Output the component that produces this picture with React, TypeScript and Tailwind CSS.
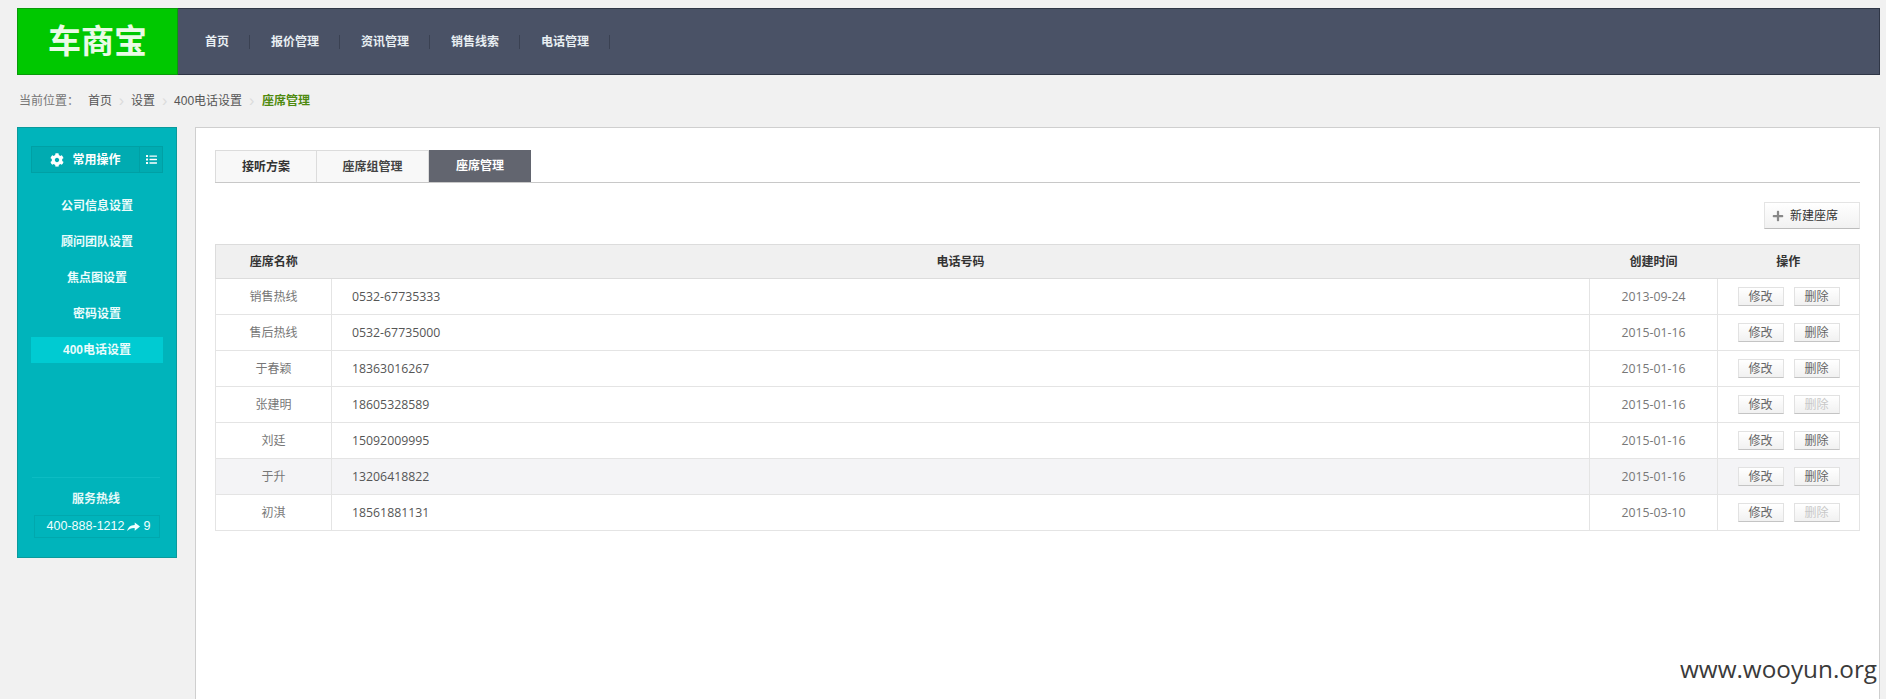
import React from 'react';
import { FaCog, FaList, FaPlus } from 'react-icons/fa';

const navItems = ['首页', '报价管理', '资讯管理', '销售线索', '电话管理'];
const sideItems = ['公司信息设置', '顾问团队设置', '焦点图设置', '密码设置', '400电话设置'];
const crumbs = ['首页', '设置', '400电话设置'];

const rows = [
  { name: '销售热线', phone: '0532-67735333', date: '2013-09-24', canDelete: true },
  { name: '售后热线', phone: '0532-67735000', date: '2015-01-16', canDelete: true },
  { name: '于春颖', phone: '18363016267', date: '2015-01-16', canDelete: true },
  { name: '张建明', phone: '18605328589', date: '2015-01-16', canDelete: false },
  { name: '刘廷', phone: '15092009995', date: '2015-01-16', canDelete: true },
  { name: '于升', phone: '13206418822', date: '2015-01-16', canDelete: true, hover: true },
  { name: '初淇', phone: '18561881131', date: '2015-03-10', canDelete: false },
];

const SmallButton: React.FC<{ label: string; disabled?: boolean }> = ({ label, disabled }) => (
  <span
    className={`flex h-[19px] w-[46px] items-center justify-center border border-[#e2e2e2] border-b-[#c4c4c4] bg-gradient-to-b from-white to-[#f1f1f1] text-[12px] ${
      disabled ? 'text-[#c8c8c8]' : 'text-[#666]'
    }`}
  >
    {label}
  </span>
);

const App: React.FC = () => {
  return (
    <div className="relative h-[699px] w-[1886px] overflow-hidden bg-[#f1f1f1] font-['Liberation_Sans','Noto_Sans_CJK_SC',sans-serif]">
      <div className="pl-[17px] pr-[6px] pt-[8px]">
        <header className="flex h-[67px] border border-[#2f3646] bg-[#4a5266]">
          <div className="-my-px -ml-px flex w-[161px] items-center justify-center border border-[#0a9a0a] bg-[#00c800]">
            <span className="text-[33px] font-bold leading-none text-[#eafbe6]">车商宝</span>
          </div>
          <nav className="flex items-center pl-[6px]">
            {navItems.map((item) => (
              <div key={item} className="flex h-[17px] items-center">
                <span className="pl-[21px] pr-[20px] text-[12px] font-bold text-[#e8eef2]">{item}</span>
                <span className="h-[14px] w-px bg-[#3a4152]" />
              </div>
            ))}
          </nav>
        </header>

        <div className="flex h-[52px] items-center pl-[2px] text-[12px] text-[#555]">
          <span className="mr-[9px] text-[#777]">当前位置：</span>
          {crumbs.map((crumb) => (
            <React.Fragment key={crumb}>
              <span>{crumb}</span>
              <span className="w-[19px] text-center text-[16px] leading-none text-[#dcdcdc]">›</span>
            </React.Fragment>
          ))}
          <span className="ml-px font-bold text-[#4f8a10]">座席管理</span>
        </div>

        <div className="flex gap-[18px]">
          <aside className="flex h-[431px] w-[160px] shrink-0 flex-col border border-[#0a9a9c] bg-[#00b4bb] px-[13px] pt-[18px]">
            <div className="flex h-[27px] border border-[#00a0a5] bg-[#00abb1] text-white">
              <div className="flex flex-1 items-center justify-center gap-[8px] border-r border-[#00a0a5]">
                <FaCog className="h-[14px] w-[14px]" />
                <span className="text-[12px] font-bold">常用操作</span>
              </div>
              <div className="flex w-[22px] items-center justify-center">
                <FaList className="h-[11px] w-[11px]" />
              </div>
            </div>
            <ul className="mt-[20px] flex flex-col">
              {sideItems.map((item, i) => (
                <li
                  key={item}
                  className={`flex h-[26px] items-center justify-center text-[12px] font-bold text-[#eafcfc] ${
                    i < sideItems.length - 1 ? 'mb-[10px]' : 'bg-[#00cbd2]'
                  }`}
                >
                  {item}
                </li>
              ))}
            </ul>
            <div className="mb-[19px] ml-px mr-[3px] mt-auto border-t border-[#0cbcc3] pt-[12px] text-center">
              <div className="text-[12px] font-bold text-[#e4f9f9]">服务热线</div>
              <div className="ml-[2px] mt-[7px] flex h-[23px] items-center justify-center gap-[3px] border border-[#00a8ae] pl-[3px] text-[12.5px] text-[#f0ffff]">
                <span>400-888-1212</span>
                <svg viewBox="0 0 16 12" className="h-[10px] w-[13px]" fill="currentColor">
                  <path d="M9.5 0.5 L16 5.5 L9.5 10.5 V7.4 C5.5 7.2 2.6 8.4 0.3 11 C1 6.5 4 3.6 9.5 3.4 Z" />
                </svg>
                <span>9</span>
              </div>
            </div>
          </aside>

          <main className="h-[573px] flex-1 border border-b-0 border-[#cfcfcf] bg-white px-[19px] pt-[22px]">
            <div className="flex h-[33px] border-b border-[#c8c8c8]">
              <div className="flex w-[102px] items-center justify-center border border-b-0 border-[#dcdcdc] bg-[#f8f8f8] text-[12px] font-bold text-[#333]">接听方案</div>
              <div className="flex w-[112px] items-center justify-center border-r border-t border-[#dcdcdc] bg-[#f8f8f8] text-[12px] font-bold text-[#444]">座席组管理</div>
              <div className="flex w-[102px] items-center justify-center bg-[#62656f] text-[12px] font-bold text-white">座席管理</div>
            </div>

            <div className="mt-[19px] flex justify-end">
              <span className="flex h-[27px] w-[96px] items-center gap-[6px] border border-[#e4e4e4] border-b-[#bcbcbc] bg-gradient-to-b from-white to-[#f1f1f1] pl-[7px] text-[12px] text-[#333]">
                <FaPlus className="h-[12px] w-[12px] text-[#888]" />
                新建座席
              </span>
            </div>

            <table className="mt-[15px] w-full table-fixed border-collapse text-[12px]">
              <colgroup>
                <col className="w-[116px]" />
                <col />
                <col className="w-[128px]" />
                <col className="w-[142px]" />
              </colgroup>
              <thead>
                <tr className="h-[34px] bg-[#f0f0f0] font-bold text-[#333]">
                  <th className="border border-r-0 border-[#dcdcdc] font-bold">座席名称</th>
                  <th className="border-y border-[#dcdcdc] font-bold">电话号码</th>
                  <th className="border-y border-[#dcdcdc] font-bold">创建时间</th>
                  <th className="border border-l-0 border-[#dcdcdc] font-bold">操作</th>
                </tr>
              </thead>
              <tbody className="text-[#777]">
                {rows.map((row) => (
                  <tr key={row.name} className={`h-[36px] ${row.hover ? 'bg-[#f4f4f6]' : ''}`}>
                    <td className="border border-[#e4e4e4] text-center">{row.name}</td>
                    <td className="border border-[#e4e4e4] pl-[20px] pt-px font-['Open_Sans','Noto_Sans_CJK_SC',sans-serif] text-[12.3px] text-[#555]">{row.phone}</td>
                    <td className="border border-[#e4e4e4] pt-px text-center font-['Open_Sans','Noto_Sans_CJK_SC',sans-serif] text-[12.3px]">{row.date}</td>
                    <td className="border border-[#e4e4e4]">
                      <div className="flex items-center justify-center gap-[10px]">
                        <SmallButton label="修改" />
                        <SmallButton label="删除" disabled={!row.canDelete} />
                      </div>
                    </td>
                  </tr>
                ))}
              </tbody>
            </table>
          </main>
        </div>
      </div>

      <div className="pointer-events-none absolute left-[1680px] top-[657px] font-['Open_Sans',sans-serif] text-[24.3px] leading-none text-[#3a3a3a]">
        www.wooyun.org
      </div>
    </div>
  );
};

export default App;
